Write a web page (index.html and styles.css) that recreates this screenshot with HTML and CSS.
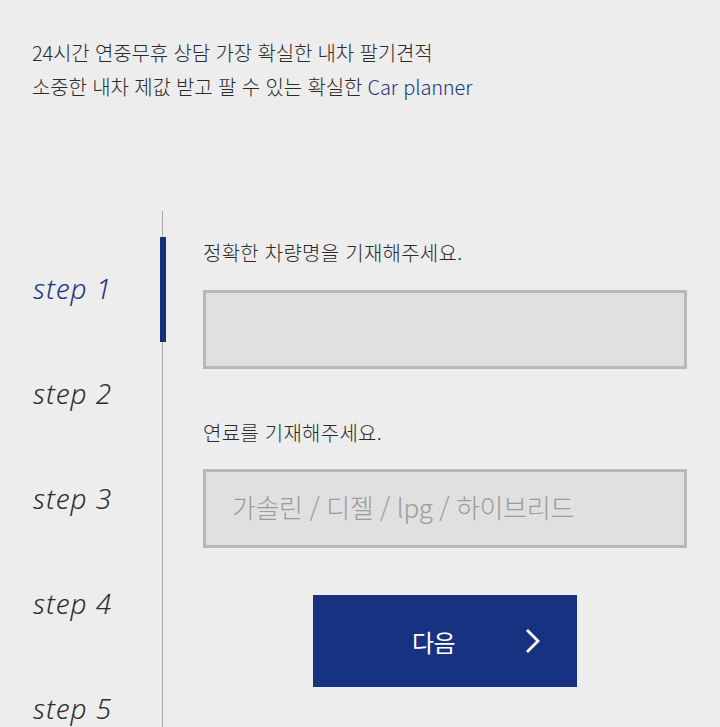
FILE: index.html
```html
<!DOCTYPE html>
<html lang="ko">
<head>
<meta charset="utf-8">
<title>Car planner</title>
<link rel="stylesheet" href="styles.css">
</head>
<body>
<header class="intro">
  <p class="intro-line">24시간 연중무휴 상담 가장 확실한 내차 팔기견적</p>
  <p class="intro-line">소중한 내차 제값 받고 팔 수 있는 확실한 <span class="brand">Car planner</span></p>
</header>
<main class="wizard">
  <ol class="steps">
    <li class="step active">step 1</li>
    <li class="step">step 2</li>
    <li class="step">step 3</li>
    <li class="step">step 4</li>
    <li class="step">step 5</li>
  </ol>
  <form class="panel">
    <label class="field-label" for="car">정확한 차량명을 기재해주세요.</label>
    <input class="field" id="car" type="text">
    <label class="field-label second" for="fuel">연료를 기재해주세요.</label>
    <input class="field" id="fuel" type="text" placeholder="가솔린 / 디젤 / lpg / 하이브리드">
    <button class="next" type="button">
      <span class="next-text">다음</span>
      <svg class="chevron" width="16" height="24" viewBox="0 0 16 24" aria-hidden="true">
        <path d="M3 2 L13 12 L3 22" fill="none" stroke="#fff" stroke-width="2.8" stroke-linecap="square"/>
      </svg>
    </button>
  </form>
</main>
</body>
</html>
```
FILE: styles.css
```css
html, body {
  margin: 0;
  padding: 0;
  background: #ededed;
}
body {
  width: 720px;
  height: 727px;
  overflow: hidden;
  font-family: "Noto Sans CJK KR", "Noto Sans", sans-serif;
  color: #333;
}
.intro {
  padding: 36px 0 0 32px;
}
.intro-line {
  margin: 0;
  font-size: 20px;
  font-weight: 300;
  line-height: 34px;
  letter-spacing: -0.15px;
  color: #2a2a2a;
}
.brand {
  color: #1a3380;
}
.wizard {
  display: flex;
  margin-top: 107px;
  height: 516px;
  overflow: hidden;
}
.steps {
  list-style: none;
  margin: 0;
  padding: 26px 0 0;
  width: 162px;
  border-right: 1px solid #a8a8a8;
  flex-shrink: 0;
}
.step {
  position: relative;
  box-sizing: border-box;
  height: 105px;
  display: flex;
  align-items: center;
  padding: 0 0 4px 33px;
  font-family: "Noto Sans", sans-serif;
  font-style: italic;
  font-weight: 300;
  font-size: 28px;
  letter-spacing: 0.9px;
  color: #2d2d2d;
}
.step.active {
  color: #1c3584;
}
.step.active::after {
  content: "";
  position: absolute;
  top: 0;
  bottom: 0;
  right: -4px;
  width: 6px;
  background: #14307f;
}
.panel {
  display: flex;
  flex-direction: column;
  padding: 27px 0 0 40px;
  width: 484px;
}
.field-label {
  font-size: 20px;
  font-weight: 300;
  line-height: 30px;
  letter-spacing: 0.25px;
  color: #2a2a2a;
  margin-bottom: 22px;
}
.field-label.second {
  margin-top: 49px;
  margin-bottom: 21px;
}
.field {
  box-sizing: border-box;
  width: 484px;
  height: 79px;
  margin: 0;
  border: 3px solid #b8b8b8;
  background: #e0e0e0;
  padding: 0 0 5px 26px;
  font-family: "Noto Sans CJK KR", "Noto Sans", sans-serif;
  font-size: 26px;
  font-weight: 300;
  letter-spacing: -0.4px;
  color: #333;
  outline: none;
}
.field::placeholder {
  color: #9b9b9b;
}
.next {
  align-self: center;
  margin-top: 47px;
  width: 264px;
  height: 92px;
  border: 0;
  background: #183282;
  display: flex;
  align-items: center;
  padding: 0 0 0 99px;
  cursor: pointer;
}
.next-text {
  font-family: "Noto Sans CJK KR", "Noto Sans", sans-serif;
  font-size: 24px;
  color: #fff;
  letter-spacing: -0.5px;
}
.chevron {
  margin-left: 70px;
  display: block;
}
```
